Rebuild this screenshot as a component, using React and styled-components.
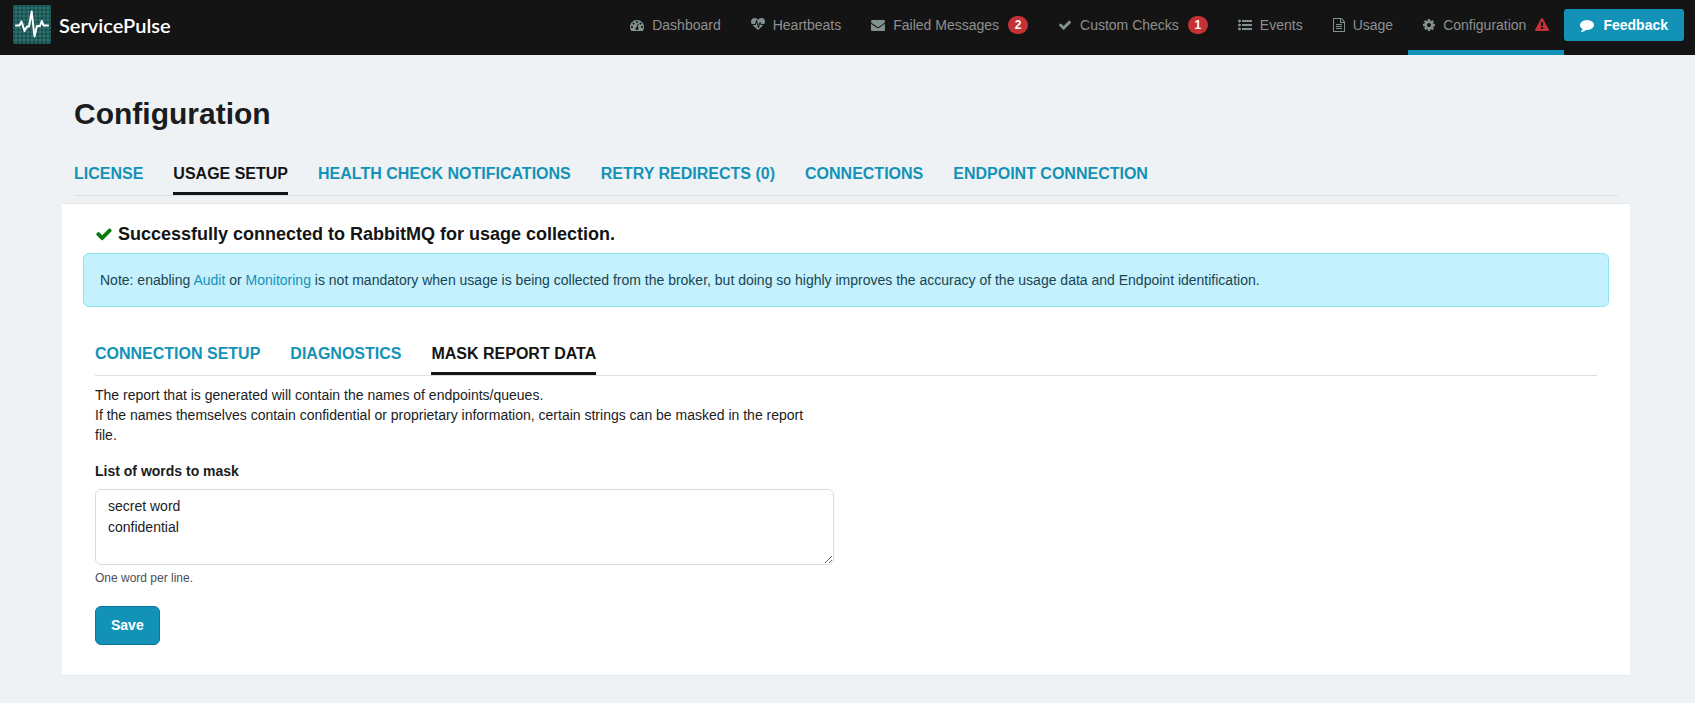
import React from "react";
import styled, { createGlobalStyle, css } from "styled-components";

const accent = "#1392b8";
const ink = "#141414";

const GlobalStyle = createGlobalStyle`
  *, *::before, *::after { box-sizing: border-box; }
  body {
    margin: 0;
    background: #eef2f5;
    color: #1a1c1e;
    font: 14px/20px "Liberation Sans", Arial, sans-serif;
  }
  a { color: ${accent}; text-decoration: none; }
`;

/* ---------- icons ---------- */

const glyphs = {
  dashboard: {
    w: 14,
    d: "M384 1152q0-53-37.5-90.5t-90.5-37.5-90.5 37.5-37.5 90.5 37.5 90.5 90.5 37.5 90.5-37.5 37.5-90.5zm192-448q0-53-37.5-90.5t-90.5-37.5-90.5 37.5-37.5 90.5 37.5 90.5 90.5 37.5 90.5-37.5 37.5-90.5zm428 481l101-382q6-26-7.5-48.5t-38.5-29.5-48 6.5-30 39.5l-101 382q-60 5-107 43.5t-63 98.5q-20 77 20 146t117 89 146-20 89-117q16-60-6-117t-72-91zm660-33q0-53-37.5-90.5t-90.5-37.5-90.5 37.5-37.5 90.5 37.5 90.5 90.5 37.5 90.5-37.5 37.5-90.5zm-640-640q0-53-37.5-90.5t-90.5-37.5-90.5 37.5-37.5 90.5 37.5 90.5 90.5 37.5 90.5-37.5 37.5-90.5zm448 192q0-53-37.5-90.5t-90.5-37.5-90.5 37.5-37.5 90.5 37.5 90.5 90.5 37.5 90.5-37.5 37.5-90.5zm320 448q0 261-141 483-19 29-54 29h-1402q-35 0-54-29-141-221-141-483 0-182 71-348t191-286 286-191 348-71 348 71 286 191 191 286 71 348z",
  },
  heartbeat: {
    w: 14,
    d: "M1280 896h305q-5 6-10 10.5t-9 7.5l-3 4-623 600q-18 18-44 18t-44-18l-624-602q-5-2-21-20h369q22 0 39.5-13.5t22.5-34.5l70-281 190 667q6 20 23 33t39 13q21 0 38-13t23-33l146-485 56 112q18 35 57 35zm512-428q0 145-103 300h-369l-111-221q-8-17-25.5-27t-36.5-8q-45 5-56 46l-129 430-196-686q-6-20-23.5-33t-39.5-13-39 13.5-22 34.5l-116 464h-423q-103-155-103-300 0-220 127-344t351-124q62 0 126.5 21.5t120 58 95.5 68.5 76 68q36-36 76-68t95.5-68.5 120-58 126.5-21.5q224 0 351 124t127 344z",
  },
  envelope: {
    w: 14,
    d: "M1792 710v794q0 66-47 113t-113 47h-1472q-66 0-113-47t-47-113v-794q44 49 101 87 362 246 497 345 57 42 92.5 65.5t94.5 48 110 24.5h2q51 0 110-24.5t94.5-48 92.5-65.5q170-123 498-345 57-39 100-87zm0-294q0 79-49 151t-122 123q-376 261-468 325-10 7-42.5 30.5t-54 38-52 32.5-57.5 27-50 9h-2q-23 0-50-9t-57.5-27-52-32.5-54-38-42.5-30.5q-91-64-262-182.5t-205-142.5q-62-42-117-115.5t-55-136.5q0-78 41.5-130t118.5-52h1472q65 0 112.5 47t47.5 113z",
  },
  check: {
    w: 14,
    d: "M1671 566q0 40-28 68l-724 724-136 136q-28 28-68 28t-68-28l-136-136-362-362q-28-28-28-68t28-68l136-136q28-28 68-28t68 28l294 295 656-657q28-28 68-28t68 28l136 136q28 28 28 68z",
  },
  list: {
    w: 14,
    d: "M384 1408q0 80-56 136t-136 56-136-56-56-136 56-136 136-56 136 56 56 136zm0-512q0 80-56 136t-136 56-136-56-56-136 56-136 136-56 136 56 56 136zm1408 416v192q0 13-9.5 22.5t-22.5 9.5h-1216q-13 0-22.5-9.5t-9.5-22.5v-192q0-13 9.5-22.5t22.5-9.5h1216q13 0 22.5 9.5t9.5 22.5zm-1408-928q0 80-56 136t-136 56-136-56-56-136 56-136 136-56 136 56 56 136zm1408 416v192q0 13-9.5 22.5t-22.5 9.5h-1216q-13 0-22.5-9.5t-9.5-22.5v-192q0-13 9.5-22.5t22.5-9.5h1216q13 0 22.5 9.5t9.5 22.5zm0-512v192q0 13-9.5 22.5t-22.5 9.5h-1216q-13 0-22.5-9.5t-9.5-22.5v-192q0-13 9.5-22.5t22.5-9.5h1216q13 0 22.5 9.5t9.5 22.5z",
  },
  file: {
    w: 12,
    d: "M1596 380q28 28 48 76t20 88v1152q0 40-28 68t-68 28h-1344q-40 0-68-28t-28-68v-1600q0-40 28-68t68-28h896q40 0 88 20t76 48zm-444-244v376h376q-10-29-22-41l-313-313q-12-12-41-22zm384 1528v-1024h-416q-40 0-68-28t-28-68v-416h-768v1536h1280zm-1024-864q0-14 9-23t23-9h704q14 0 23 9t9 23v64q0 14-9 23t-23 9h-704q-14 0-23-9t-9-23v-64zm736 224q14 0 23 9t9 23v64q0 14-9 23t-23 9h-704q-14 0-23-9t-9-23v-64q0-14 9-23t23-9h704zm0 256q14 0 23 9t9 23v64q0 14-9 23t-23 9h-704q-14 0-23-9t-9-23v-64q0-14 9-23t23-9h704z",
  },
  cog: {
    w: 12,
    d: "M1152 896q0-106-75-181t-181-75-181 75-75 181 75 181 181 75 181-75 75-181zm512-109v222q0 12-8 23t-20 13l-185 28q-19 54-39 91 35 50 107 138 10 12 10 25t-9 23q-27 37-99 108t-94 71q-12 0-26-9l-138-108q-44 23-91 38-16 136-29 186-7 28-36 28h-222q-14 0-24.5-8.5t-11.5-21.5l-28-184q-49-16-90-37l-141 107q-10 9-25 9-14 0-25-11-126-114-165-168-7-10-7-23 0-12 8-23 15-21 51-66.5t54-70.5q-27-50-41-99l-183-27q-13-2-21-12.5t-8-23.5v-222q0-12 8-23t19-13l186-28q14-46 39-92-40-57-107-138-10-12-10-24 0-10 9-23 26-36 98.5-107.5t94.5-71.5q13 0 26 10l138 107q44-23 91-38 16-136 29-186 7-28 36-28h222q14 0 24.5 8.5t11.5 21.5l28 184q49 16 90 37l142-107q9-9 24-9 13 0 25 10 129 119 165 170 7 8 7 22 0 12-8 23-15 21-51 66.5t-54 70.5q26 50 41 98l183 28q13 2 21 12.5t8 23.5z",
  },
  warning: {
    w: 14,
    d: "M1024 1375v-190q0-14-9.5-23.5t-22.5-9.5h-192q-13 0-22.5 9.5t-9.5 23.5v190q0 14 9.5 23.5t22.5 9.5h192q13 0 22.5-9.5t9.5-23.5zm-2-374l18-459q0-12-10-19-13-11-24-11h-220q-11 0-24 11-10 7-10 21l17 457q0 10 10 16.5t24 6.5h185q14 0 23.5-6.5t10.5-16.5zm-14-934l768 1408q35 63-2 126-17 29-46.5 46t-63.5 17h-1536q-34 0-63.5-17t-46.5-46q-37-63-2-126l768-1408q17-31 47-49t65-18 65 18 47 49z",
  },
  comment: {
    w: 14,
    d: "M1792 896q0 174-120 321.5t-326 233-450 85.5q-70 0-145-8-198 175-460 242-49 14-114 22-17 2-30.5-9t-17.5-29v-1q-3-4-.5-12t2-10 4.5-9.5l6-9 7-8.5 8-9q7-8 31-34.5t34.5-38 31-39.5 32.5-51 27-59 26-76q-157-89-247.5-220t-90.5-281q0-130 71-248.5t191-204.5 286-136.5 348-50.5q244 0 450 85.5t326 233 120 321.5z",
  },
};

const Glyph = styled.svg`
  display: block;
  flex: none;
  fill: ${(p) => p.$color || "currentColor"};
`;

function Icon({ name, size = 14, color }) {
  const { w, d } = glyphs[name];
  const units = w * 128;
  return (
    <Glyph
      $color={color}
      width={(w * size) / 14}
      height={size}
      viewBox={`${(1792 - units) / 2} 0 ${units} 1792`}
      aria-hidden="true"
    >
      <path d={d} />
    </Glyph>
  );
}

function Logo() {
  const lines = [2, 6, 10, 14, 18, 22, 26, 30, 34];
  return (
    <svg width="38" height="39" viewBox="0 0 38 39" aria-hidden="true">
      <rect width="38" height="39" fill="#1b4a4b" />
      <g stroke="#2f7d78" strokeWidth="1">
        {lines.map((n) => (
          <path key={n} d={`M${n + 1} 0V39M0 ${n + 1}H38`} />
        ))}
      </g>
      <path
        d="M3 20.500H6.500L8.500 16.500L11.500 26L14 21.500H16L18.700 6.500L21.500 31.500L24 21H27L28.800 16L30.500 20.500H35"
        fill="none"
        stroke="#fff"
        strokeWidth="2"
        strokeLinecap="round"
        strokeLinejoin="round"
      />
    </svg>
  );
}

/* ---------- header ---------- */

const Header = styled.header`
  display: flex;
  justify-content: space-between;
  min-height: 55px;
  padding: 0 11px 0 13px;
  background: ${ink};
`;

const Brand = styled.a`
  display: flex;
  align-items: center;
  align-self: flex-start;
  gap: 8px;
  padding-top: 5px;
  color: #fff;
  font: 600 20px/38px Lato, sans-serif;
`;

const Nav = styled.nav`
  display: flex;
`;

const NavLink = styled.a`
  display: flex;
  align-items: center;
  gap: 8px;
  padding: 0 15px;
  color: #8f8f8f;
  border-bottom: 5px solid ${(p) => (p.$active ? accent : "transparent")};
  white-space: nowrap;
`;

const NavMark = styled.span`
  margin-left: 1px;
`;

const navIconColor = "#829090";

const Badge = styled(NavMark)`
  min-width: 20px;
  border-radius: 9px;
  background: #c43235;
  color: #fff;
  font-size: 12px;
  line-height: 18px;
  font-weight: 700;
  text-align: center;
`;

const buttonBase = css`
  background: ${accent};
  color: #fff;
  font: 700 14px/20px "Liberation Sans", Arial, sans-serif;
  cursor: pointer;
`;

const FeedbackButton = styled.button`
  ${buttonBase}
  display: flex;
  align-items: center;
  align-self: flex-start;
  gap: 9px;
  margin-top: 9px;
  padding: 6px 16px;
  border: 0;
  border-radius: 3px;
`;

/* ---------- page ---------- */

const Page = styled.main`
  padding: 42px 65px 27px 62px;
`;

const Heading = styled.div`
  padding: 0 12px;
`;

const Title = styled.h1`
  margin: 0 0 31px;
  font-size: 30px;
  line-height: 33px;
`;

const Tabs = styled.nav`
  display: flex;
  gap: 30px;
  border-bottom: 1px solid #dcdfe1;
`;

const Tab = styled.a`
  padding-bottom: 5px;
  border-bottom: 3px solid ${(p) => (p.$active ? ink : "transparent")};
  color: ${(p) => (p.$active ? ink : accent)};
  font-size: 16px;
  line-height: 26px;
  font-weight: 700;
  text-transform: uppercase;
`;

const Panel = styled.section`
  margin-top: 7px;
  padding: 20px 21px 30px;
  background: #fff;
  border: 1px solid #e6e8ea;
  border-width: 1px 0;
`;

const Status = styled.h2`
  display: flex;
  align-items: center;
  gap: 5px;
  margin: 0 0 9px;
  padding: 0 12px;
  font-size: 18px;
  line-height: 20px;
  color: ${ink};
`;

const Note = styled.p`
  margin: 0 0 34px;
  padding: 16px;
  background: #c5f0fe;
  border: 1px solid #8ee4f6;
  border-radius: 6px;
  color: #174650;
`;

const Section = styled.div`
  padding: 0 12px;
`;

const Form = styled.form`
  display: flex;
  flex-direction: column;
  align-items: flex-start;
  width: calc(50% - 12px);
  margin-top: 9px;
`;

const Intro = styled.p`
  margin: 0 0 16px;
  padding-right: 12px;
`;

const Label = styled.label`
  margin-bottom: 8px;
  font-weight: 700;
`;

const WordList = styled.textarea`
  display: block;
  width: 100%;
  height: 76px;
  padding: 6px 12px;
  border: 1px solid #d8dce1;
  border-radius: 6px;
  background: #fff;
  color: #1a1c1e;
  font: 14px/21px "Liberation Sans", Arial, sans-serif;
  resize: vertical;
`;

const Hint = styled.small`
  margin: 4px 0 19px;
  color: #4c4f52;
  font-size: 12px;
  line-height: 18px;
`;

const SaveButton = styled.button`
  ${buttonBase}
  padding: 8px 15px 9px;
  border: 1px solid #0f7595;
  border-radius: 6px;
`;

const navItems = [
  { icon: "dashboard", label: "Dashboard" },
  { icon: "heartbeat", label: "Heartbeats" },
  { icon: "envelope", label: "Failed Messages", count: 2 },
  { icon: "check", label: "Custom Checks", count: 1 },
  { icon: "list", label: "Events" },
  { icon: "file", label: "Usage" },
  { icon: "cog", label: "Configuration", active: true, warning: true },
];

const pageTabs = [
  "License",
  "Usage Setup",
  "Health Check Notifications",
  "Retry Redirects (0)",
  "Connections",
  "Endpoint Connection",
];

const setupTabs = ["Connection Setup", "Diagnostics", "Mask Report Data"];

function TabBar({ items, current, label }) {
  return (
    <Tabs aria-label={label}>
      {items.map((item) => (
        <Tab
          key={item}
          href="#"
          $active={item === current}
          aria-current={item === current ? "page" : undefined}
        >
          {item}
        </Tab>
      ))}
    </Tabs>
  );
}

export default function App() {
  return (
    <>
      <GlobalStyle />
      <Header>
        <Brand href="#">
          <Logo />
          ServicePulse
        </Brand>
        <Nav aria-label="Main">
          {navItems.map((item) => (
            <NavLink key={item.label} href="#" $active={item.active}>
              <Icon name={item.icon} color={navIconColor} />
              {item.label}
              {item.count && <Badge>{item.count}</Badge>}
              {item.warning && (
                <NavMark>
                  <Icon name="warning" color="#c43235" />
                </NavMark>
              )}
            </NavLink>
          ))}
          <FeedbackButton type="button">
            <Icon name="comment" />
            Feedback
          </FeedbackButton>
        </Nav>
      </Header>
      <Page>
        <Heading>
          <Title>Configuration</Title>
          <TabBar items={pageTabs} current="Usage Setup" label="Configuration" />
        </Heading>
        <Panel>
          <Status>
            <Icon name="check" size={18} color="#0b7a0b" />
            Successfully connected to RabbitMQ for usage collection.
          </Status>
          <Note>
            Note: enabling <a href="#">Audit</a> or <a href="#">Monitoring</a> is
            not mandatory when usage is being collected from the broker, but
            doing so highly improves the accuracy of the usage data and Endpoint
            identification.
          </Note>
          <Section>
            <TabBar
              items={setupTabs}
              current="Mask Report Data"
              label="Usage setup"
            />
            <Form onSubmit={(e) => e.preventDefault()}>
              <Intro>
                The report that is generated will contain the names of
                endpoints/queues.
                <br />
                If the names themselves contain confidential or proprietary
                information, certain strings can be masked in the report file.
              </Intro>
              <Label htmlFor="mask-words">List of words to mask</Label>
              <WordList
                id="mask-words"
                aria-describedby="mask-hint"
                defaultValue={"secret word\nconfidential"}
              />
              <Hint id="mask-hint">One word per line.</Hint>
              <SaveButton type="submit">Save</SaveButton>
            </Form>
          </Section>
        </Panel>
      </Page>
    </>
  );
}
